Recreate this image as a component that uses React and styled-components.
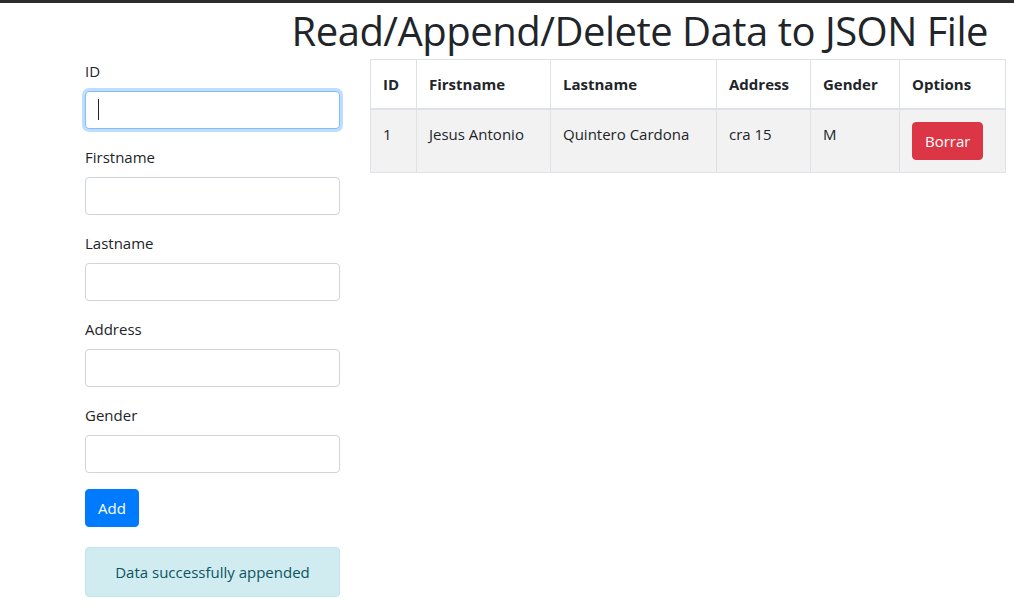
import React from 'react';
import styled, { createGlobalStyle } from 'styled-components';

const GlobalStyle = createGlobalStyle`
  html, body {
    margin: 0;
    padding: 0;
    background: #fff;
  }
  body {
    font-family: "Open Sans", "Noto Sans", "DejaVu Sans", sans-serif;
    font-size: 16px;
    line-height: 1.5;
    color: #212529;
    border-top: 3px solid #2b2b2b;
  }
  * {
    box-sizing: border-box;
  }
`;

const Page = styled.div`
  width: 1014px;
`;

const Heading = styled.h1`
  margin: 0;
  padding-right: 26px;
  font-size: 40px;
  font-weight: 400;
  line-height: 56px;
  text-align: right;
  letter-spacing: -0.5px;
`;

const Row = styled.div`
  display: flex;
  align-items: flex-start;
  padding-left: 85px;
  gap: 30px;
`;

const Form = styled.form`
  width: 255px;
  display: flex;
  flex-direction: column;
`;

const FormGroup = styled.div`
  margin-bottom: 16px;
`;

const Label = styled.label`
  display: block;
  margin-bottom: 8px;
  font-size: 15px;
  line-height: 24px;
`;

const InputWrap = styled.div`
  position: relative;
`;

const Input = styled.input`
  display: block;
  width: 100%;
  height: 38px;
  padding: 6px 12px;
  font-family: inherit;
  font-size: 16px;
  color: #495057;
  background: #fff;
  border: 1px solid ${(p) => (p.$focused ? '#80bdff' : '#ced4da')};
  border-radius: 4px;
  outline: none;
  box-shadow: ${(p) => (p.$focused ? '0 0 0 3px rgba(0, 123, 255, 0.25)' : 'none')};
  caret-color: transparent;
`;

// the text caret visible in the focused field
const Caret = styled.span`
  position: absolute;
  left: 13px;
  top: 8px;
  width: 1px;
  height: 21px;
  background: #212529;
  pointer-events: none;
`;

const Button = styled.button`
  height: 38px;
  padding: 6px 12px;
  font-family: inherit;
  font-size: 15px;
  line-height: 24px;
  color: #fff;
  background: ${(p) => (p.$variant === 'danger' ? '#dc3545' : '#007bff')};
  border: 1px solid ${(p) => (p.$variant === 'danger' ? '#dc3545' : '#007bff')};
  border-radius: 4px;
  cursor: pointer;
`;

const AddButton = styled(Button)`
  align-self: flex-start;
  width: 54px;
`;

const Alert = styled.div`
  margin-top: 20px;
  padding: 12px 20px;
  font-size: 15px;
  line-height: 24px;
  text-align: center;
  color: #0c5460;
  background: #d1ecf1;
  border: 1px solid #bee5eb;
  border-radius: 4px;
`;

const Table = styled.table`
  width: 635px;
  border-collapse: collapse;
  border: 1px solid #dee2e6;
  table-layout: fixed;
`;

const Th = styled.th`
  padding: 12px;
  font-size: 15px;
  font-weight: 700;
  line-height: 24px;
  text-align: left;
  vertical-align: bottom;
  border: 1px solid #dee2e6;
  border-bottom-width: 2px;
`;

const Tr = styled.tr`
  background: ${(p) => (p.$striped ? '#f2f2f2' : 'transparent')};
`;

const Td = styled.td`
  padding: 12px;
  font-size: 15px;
  line-height: 24px;
  vertical-align: top;
  border: 1px solid #dee2e6;
`;

const columns = [
  { label: 'ID', width: 46 },
  { label: 'Firstname', width: 134 },
  { label: 'Lastname', width: 166 },
  { label: 'Address', width: 94 },
  { label: 'Gender', width: 89 },
  { label: 'Options', width: 106 },
];

const fields = ['ID', 'Firstname', 'Lastname', 'Address', 'Gender'];

const rows = [
  { id: 1, firstname: 'Jesus Antonio', lastname: 'Quintero Cardona', address: 'cra 15', gender: 'M' },
];

const App = () => {
  return (
    <Page>
      <GlobalStyle />
      <Heading>Read/Append/Delete Data to JSON File</Heading>
      <Row>
        <Form onSubmit={(e) => e.preventDefault()}>
          {fields.map((f, i) => (
            <FormGroup key={f}>
              <Label>{f}</Label>
              <InputWrap>
                <Input type="text" $focused={i === 0} />
                {i === 0 && <Caret />}
              </InputWrap>
            </FormGroup>
          ))}
          <AddButton type="submit">Add</AddButton>
          <Alert>Data successfully appended</Alert>
        </Form>
        <Table>
          <colgroup>
            {columns.map((c) => (
              <col key={c.label} style={{ width: c.width }} />
            ))}
          </colgroup>
          <thead>
            <tr>
              {columns.map((c) => (
                <Th key={c.label}>{c.label}</Th>
              ))}
            </tr>
          </thead>
          <tbody>
            {rows.map((r) => (
              <Tr key={r.id} $striped>
                <Td>{r.id}</Td>
                <Td>{r.firstname}</Td>
                <Td>{r.lastname}</Td>
                <Td>{r.address}</Td>
                <Td>{r.gender}</Td>
                <Td>
                  <Button type="button" $variant="danger">Borrar</Button>
                </Td>
              </Tr>
            ))}
          </tbody>
        </Table>
      </Row>
    </Page>
  );
};

export default App;
